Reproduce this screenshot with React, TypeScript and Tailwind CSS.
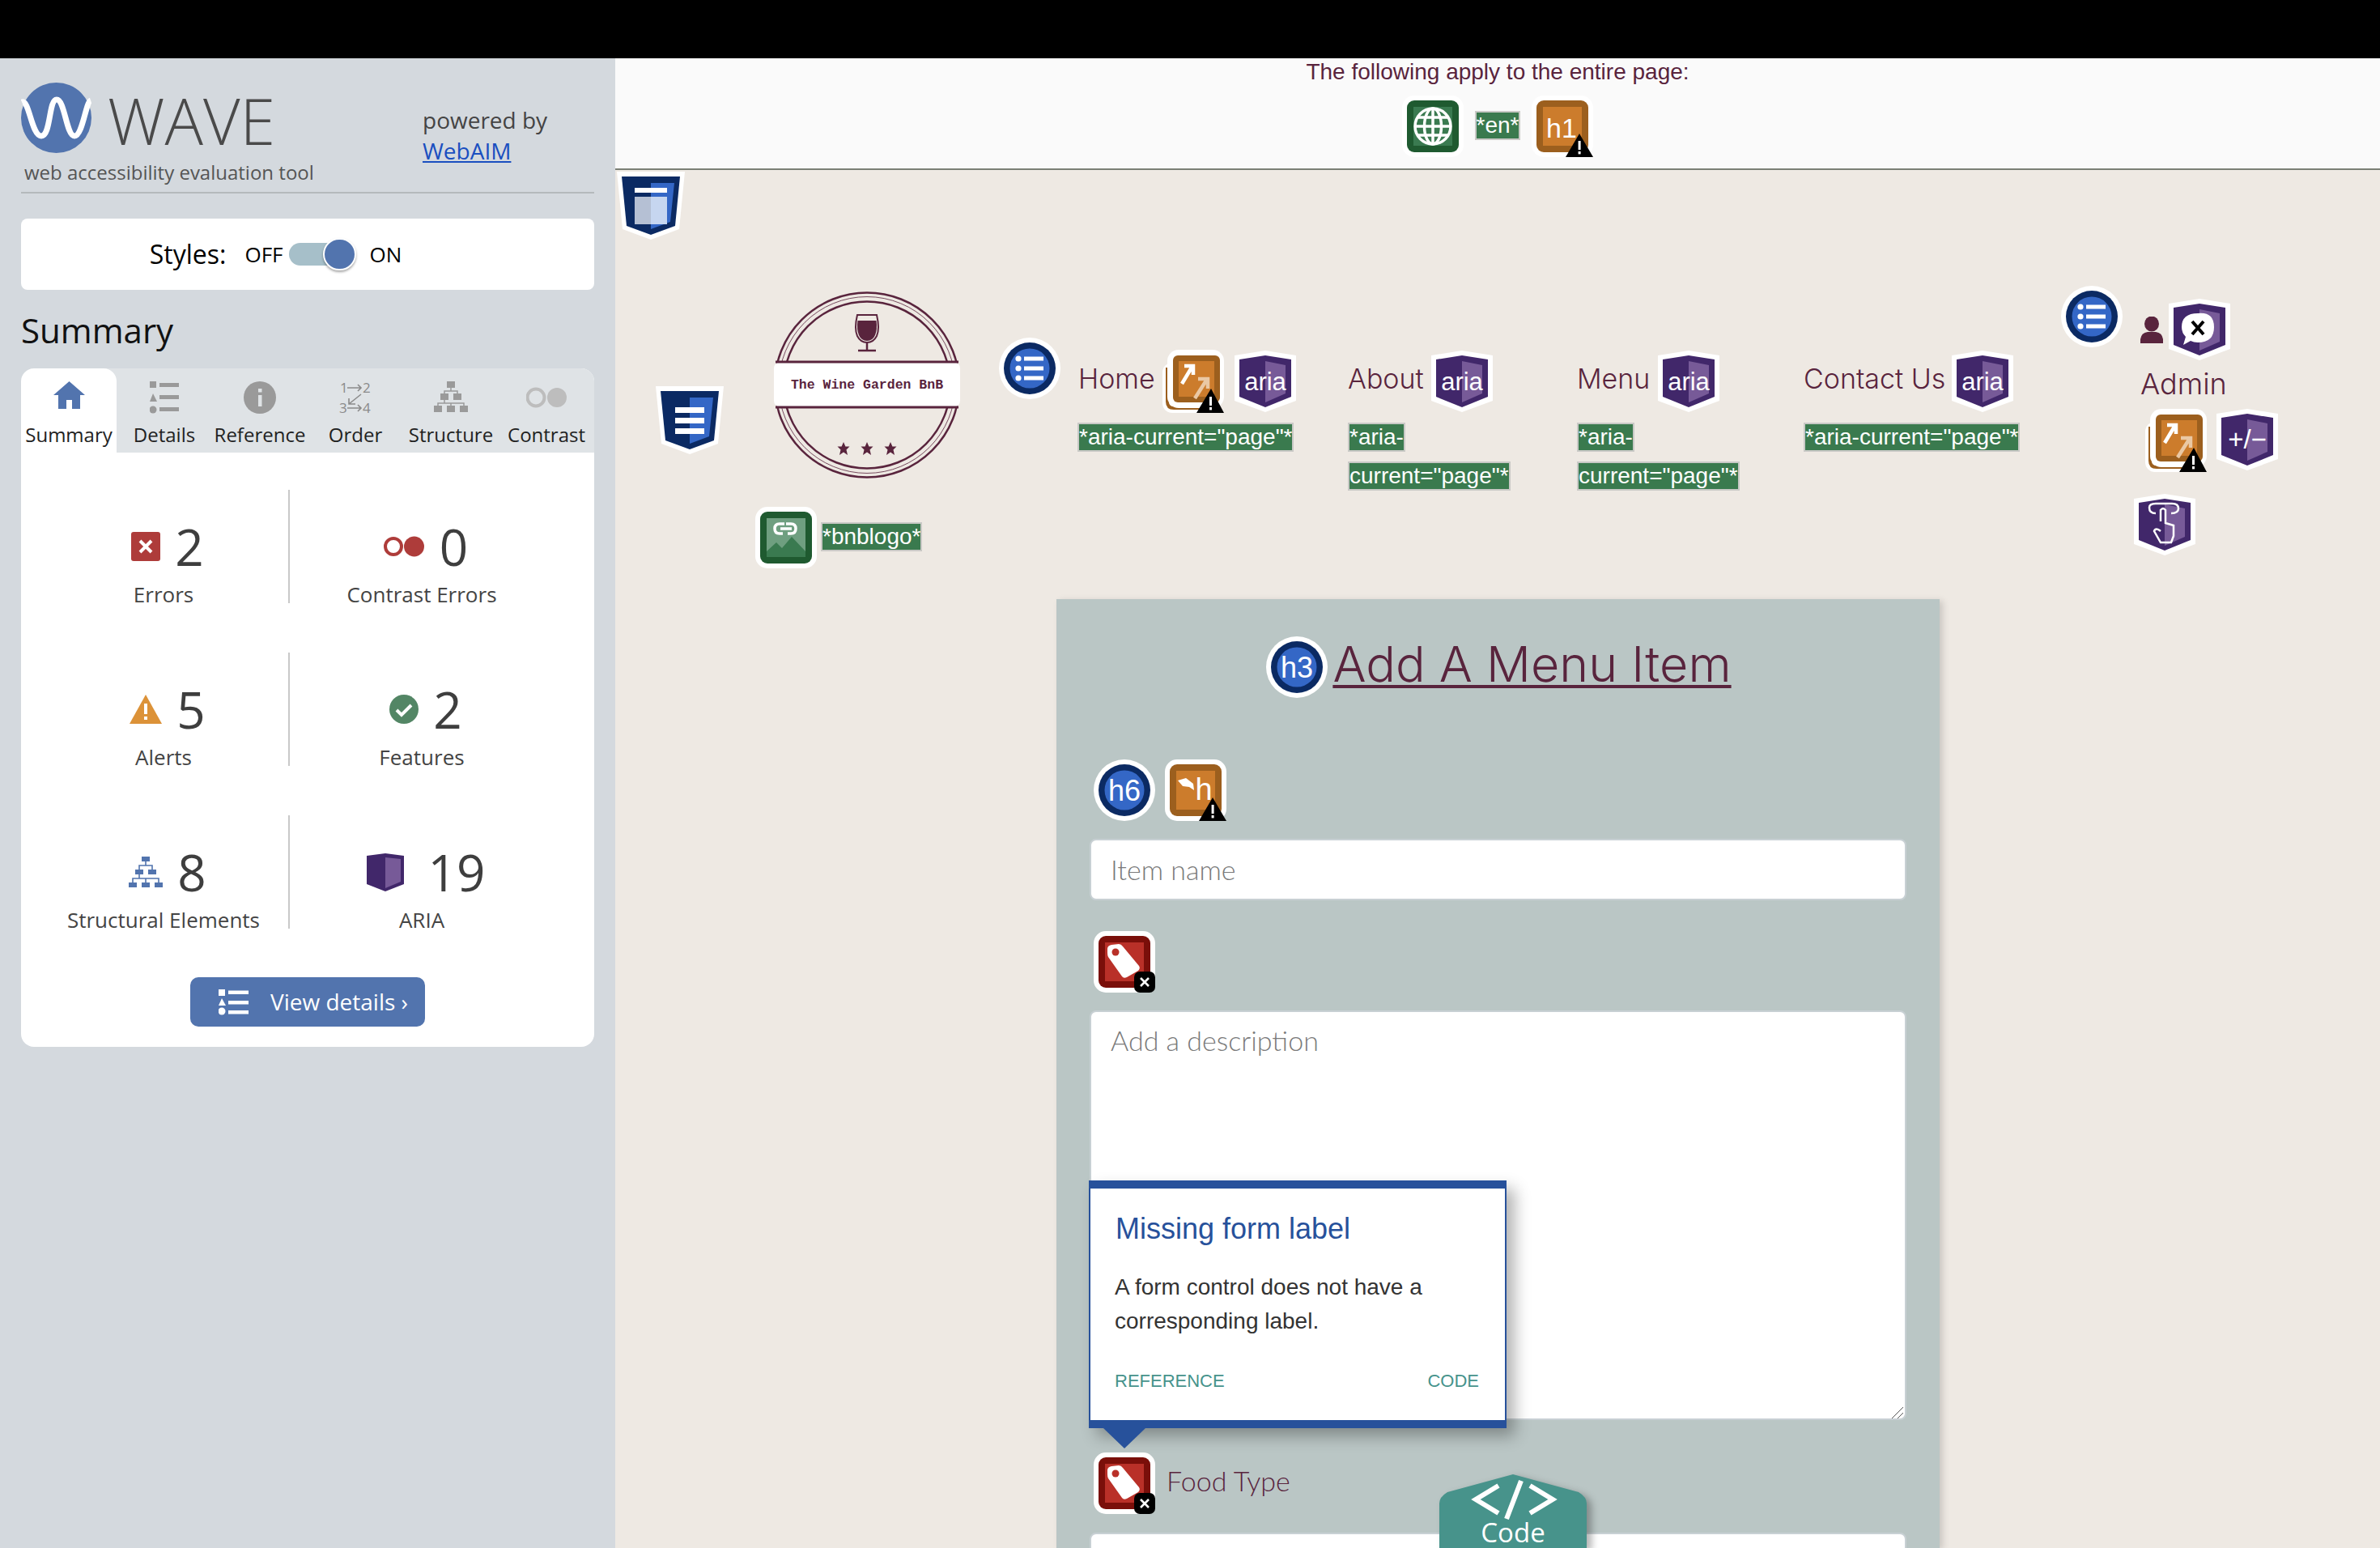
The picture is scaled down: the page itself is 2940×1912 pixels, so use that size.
import React from "react";

const C = {
  purple: ["#41276a", "#775a98"],
  blue: ["#0b2a63", "#3467c6"],
  orange: ["#9c5f1e", "#cc7c2c"],
  green: ["#1f5a30", "#3a7a50"],
  red: ["#7a0f0a", "#b93028"],
};

function Badge({ kind }: { kind?: "alert" | "error" }) {
  if (kind === "alert")
    return (
      <g>
        <path d="M59 47 L76 76 H42 Z" fill="#000" />
        <rect x="57.6" y="56" width="3" height="11" fill="#fff" />
        <rect x="57.6" y="69" width="3" height="3.4" fill="#fff" />
      </g>
    );
  if (kind === "error")
    return (
      <g>
        <rect x="50" y="50" width="26" height="26" rx="7" fill="#000" />
        <path d="M58 58 L68 68 M68 58 L58 68" stroke="#fff" strokeWidth="2.6" />
      </g>
    );
  return null;
}

function Square({ color, children, badge, size = 76 }: { color: string[]; children?: React.ReactNode; badge?: "alert" | "error"; size?: number }) {
  return (
    <svg width={size} height={size} viewBox="0 0 76 76" className="shrink-0 block">
      <rect x="0" y="0" width="76" height="76" rx="15" fill="#fff" />
      <rect x="6" y="6" width="64" height="64" rx="9" fill={color[0]} />
      <rect x="14" y="14" width="48" height="48" fill={color[1]} />
      {children}
      <Badge kind={badge} />
    </svg>
  );
}

function Circle({ children }: { children?: React.ReactNode }) {
  return (
    <svg width="76" height="76" viewBox="0 0 76 76" className="shrink-0 block">
      <circle cx="38" cy="38" r="38" fill="#fff" />
      <circle cx="38" cy="38" r="32" fill={C.blue[0]} />
      <circle cx="38" cy="38" r="24.5" fill={C.blue[1]} />
      {children}
    </svg>
  );
}

function Shield({ children }: { children?: React.ReactNode }) {
  return (
    <svg width="76" height="76" viewBox="0 0 76 76" className="shrink-0 block">
      <path d="M38 0 L76 6 V62 L38 76 L0 62 V6 Z" fill="#fff" />
      <path d="M38 6 L70 11 V57 L38 70 L6 57 V11 Z" fill={C.purple[0]} />
      <path d="M38 13 L63 18 V53 L38 64 Z" fill={C.purple[1]} />
      {children}
    </svg>
  );
}

function BlueShield({ children }: { children?: React.ReactNode }) {
  return (
    <svg width="84" height="84" viewBox="0 0 84 84" className="shrink-0 block">
      <path d="M0 0 H84 L77 71 L42 84 L7 71 Z" fill="#fff" />
      <path d="M6 6 H78 L72 67 L42 78 L12 67 Z" fill={C.blue[0]} />
      <path d="M42 14 H71 L66 62 L42 71 Z" fill={C.blue[1]} />
      {children}
    </svg>
  );
}

const ListLines = () => (
  <g fill="#fff">
    <circle cx="24" cy="26" r="3.6" />
    <circle cx="24" cy="38" r="3.6" />
    <circle cx="24" cy="50" r="3.6" />
    <rect x="31" y="23.5" width="24" height="5" />
    <rect x="31" y="35.5" width="24" height="5" />
    <rect x="31" y="47.5" width="24" height="5" />
  </g>
);

const IconText = ({ t, size = 36, x = 38, y = 50 }: { t: string; size?: number; x?: number; y?: number }) => (
  <text x={x} y={y} textAnchor="middle" fill="#fff" fontFamily="'Liberation Sans', Arial, sans-serif" fontSize={size}>
    {t}
  </text>
);

const Aria = () => (
  <Shield>
    <IconText t="aria" size={31} y={49} />
  </Shield>
);

function LinkAlert() {
  return (
    <svg width="76" height="78" viewBox="0 0 76 78" className="shrink-0 block">
      <rect x="0" y="16" width="66" height="62" rx="12" fill="#fff" />
      <path d="M6 22 V64 Q6 72 14 72 H50" fill="none" stroke={C.orange[0]} strokeWidth="4" />
      <rect x="6" y="0" width="70" height="72" rx="14" fill="#fff" />
      <rect x="13" y="7" width="58" height="58" rx="6" fill={C.orange[0]} />
      <rect x="20" y="14" width="44" height="44" fill={C.orange[1]} />
      <path d="M24 42 L36 22 M27 20 H38 V31" fill="none" stroke="#fff" strokeWidth="4.5" />
      <path d="M40 60 L54 38 M44 36 H56 V48" fill="none" stroke="#eac8a4" strokeWidth="4.5" />
      <path d="M60 48 L76 78 H42 Z" fill="#000" />
      <rect x="58" y="58" width="3" height="11" fill="#fff" />
      <rect x="58" y="71" width="3" height="3.4" fill="#fff" />
    </svg>
  );
}

const TagGlyph = () => (
  <g>
    <path d="M17 22 Q17 18 22 17 L31 16 Q34 16 36 19 L56 43 Q58 46 55 49 L41 57 Q37 59 35 56 L18 32 Q17 30 17 27 Z" fill="#fff" />
    <circle cx="27" cy="26" r="4.5" fill={C.red[1]} />
  </g>
);

function Tag({ children }: { children: React.ReactNode }) {
  return (
    <span className="inline-block h-[36px] bg-[#3a7a4e] border-2 border-[#c9c9c6] text-white text-[28px] leading-[32px] font-['Liberation_Sans',Arial,sans-serif] whitespace-nowrap">
      {children}
    </span>
  );
}

function NavLabel({ children }: { children: React.ReactNode }) {
  return <span className="text-[34px] leading-[44px] font-light text-[#59243d] font-['Inter',sans-serif] whitespace-nowrap">{children}</span>;
}

function Stat({ icon, n, label, gap }: { icon: React.ReactNode; n: string; label: string; gap: string }) {
  return (
    <div className="flex flex-col items-center h-[140px] pt-[34px]">
      <div className={`flex items-center h-[72px] pl-[10px] ${gap}`}>
        {icon}
        <span className="text-[62px] leading-[72px] text-[#3e3e3e]">{n}</span>
      </div>
      <div className="text-[26px] leading-[36px] text-[#444] mt-[5px] whitespace-nowrap">{label}</div>
    </div>
  );
}

function Tab({ icon, label, active }: { icon: React.ReactNode; label: string; active?: boolean }) {
  return (
    <div className={`w-[118px] h-[104px] flex flex-col items-center ${active ? "bg-white rounded-tl-[16px] rounded-tr-[16px]" : ""}`}>
      <div className="h-[64px] pt-[16px] flex items-start justify-center">{icon}</div>
      <div className="text-[24px] leading-[36px] text-[#222] whitespace-nowrap">{label}</div>
    </div>
  );
}

function Sidebar() {
  return (
    <aside className="w-[760px] shrink-0 bg-[#d4d9de] px-[26px] font-['Open_Sans',sans-serif]">
      <div className="flex h-[167px] border-b-2 border-[#b4b9bc]">
        <div className="w-[496px]">
          <div className="flex items-center pt-[30px] h-[117px]">
            <svg width="87" height="87" viewBox="0 0 87 87" className="shrink-0">
              <circle cx="43.5" cy="43.5" r="43.5" fill="#5274ae" />
              <path d="M1 24 C10 20 13 66 25 66 C37 66 34 21 44 21 C54 21 56 66 66 66 C76 66 80 24 86 22" fill="none" stroke="#fff" strokeWidth="7" />
            </svg>
            <span className="ml-[20px] pt-[6px] text-[79px] leading-[80px] font-light text-[#4a4a4a]">WAVE</span>
          </div>
          <div className="ml-[4px] mt-[7px] text-[24px] leading-[34px] text-[#555] whitespace-nowrap">web accessibility evaluation tool</div>
        </div>
        <div className="pt-[57px] text-[28px] leading-[38px] text-[#444]">
          <div>powered by</div>
          <div className="text-[#1a4fc0] underline">WebAIM</div>
        </div>
      </div>

      <div className="mt-[31px] h-[88px] bg-white rounded-[8px] flex items-center justify-center pr-[79px] text-black">
        <span className="text-[32px] mr-[23px]">Styles:</span>
        <span className="text-[26px] mr-[8px]">OFF</span>
        <span className="relative w-[83px] h-[40px] flex items-center mr-[16px]">
          <span className="block w-[70px] h-[28px] rounded-full bg-[#a6bfc9]" />
          <span className="absolute right-0 top-0 w-[41px] h-[40px] rounded-full bg-[#5274ae] border-2 border-white shadow-[0_2px_3px_rgba(0,0,0,0.35)]" />
        </span>
        <span className="text-[26px]">ON</span>
      </div>

      <h2 className="mt-[20px] text-[42px] leading-[60px] text-[#111]">Summary</h2>

      <div className="mt-[17px] bg-white rounded-[16px] h-[838px] overflow-hidden">
        <div className="flex bg-[#dfe3e6] h-[104px]">
          <Tab active label="Summary" icon={
            <svg width="39" height="34" viewBox="0 0 39 34"><path d="M19.5 0 L39 17 H33 V34 H23 V23 H16 V34 H6 V17 H0 Z" fill="#5274ae" /></svg>
          } />
          <Tab label="Details" icon={
            <svg width="36" height="40" viewBox="0 0 36 40" fill="#9a9a9a">
              <rect x="0" y="0" width="8" height="8" /><path d="M4 15 L9 25 H0 Z" /><circle cx="4" cy="35" r="4.5" />
              <rect x="12" y="2" width="24" height="5" /><rect x="12" y="17" width="24" height="5" /><rect x="12" y="32" width="24" height="5" />
            </svg>
          } />
          <Tab label="Reference" icon={
            <svg width="40" height="40" viewBox="0 0 40 40"><circle cx="20" cy="20" r="20" fill="#9a9a9a" /><rect x="18" y="17" width="4.5" height="14" fill="#dfe3e6" /><rect x="18" y="9" width="4.5" height="4.5" fill="#dfe3e6" /></svg>
          } />
          <Tab label="Order" icon={
            <svg width="40" height="40" viewBox="0 0 40 40" fill="#8a8a8a" fontFamily="'Open Sans', sans-serif" fontSize="17" className="overflow-visible">
              <text x="1" y="14">1</text><text x="29" y="14">2</text><text x="0" y="39">3</text><text x="29" y="39">4</text>
              <path d="M10 8 H27 M23 4 L27 8 L23 12 M10 33 H27 M23 29 L27 33 L23 37 M27 16 L12 28 M12 21 V28 H20" fill="none" stroke="#8a8a8a" strokeWidth="1.6" />
            </svg>
          } />
          <Tab label="Structure" icon={
            <svg width="42" height="38" viewBox="0 0 42 38" fill="#9a9a9a">
              <rect x="16" y="0" width="10" height="8" /><rect x="8" y="15" width="10" height="8" /><rect x="24" y="15" width="10" height="8" />
              <rect x="0" y="30" width="10" height="8" /><rect x="16" y="30" width="10" height="8" /><rect x="32" y="30" width="10" height="8" />
              <path d="M21 8 V12 M13 15 V12 H29 V15 M13 23 V27 M5 30 V27 H37 V30 M21 27 V30" fill="none" stroke="#9a9a9a" strokeWidth="1.5" />
            </svg>
          } />
          <Tab label="Contrast" icon={
            <svg width="50" height="40" viewBox="0 0 50 40"><circle cx="12" cy="20" r="10.5" fill="none" stroke="#bdbdbd" strokeWidth="4" /><circle cx="38" cy="20" r="12" fill="#bdbdbd" /></svg>
          } />
        </div>

        <div className="grid grid-cols-[310px_326px] ml-[22px] gap-y-[61px] mt-[46px]">
          <div className="border-r-2 border-[#c9c9c9]">
            <Stat n="2" label="Errors" gap="gap-[18px]" icon={
              <svg width="36" height="36" viewBox="0 0 36 36"><rect width="36" height="36" rx="3" fill="#ae3c3a" /><path d="M11 11 L25 25 M25 11 L11 25" stroke="#fff" strokeWidth="4" /></svg>
            } />
          </div>
          <Stat n="0" label="Contrast Errors" gap="gap-[19px]" icon={
            <svg width="50" height="26" viewBox="0 0 50 26"><circle cx="12" cy="13" r="10" fill="none" stroke="#ae3c3a" strokeWidth="4" /><circle cx="37.5" cy="13" r="12.5" fill="#ae3c3a" /></svg>
          } />
          <div className="border-r-2 border-[#c9c9c9]">
            <Stat n="5" label="Alerts" gap="gap-[18px]" icon={
              <svg width="40" height="36" viewBox="0 0 40 36"><path d="M20 0 L40 36 H0 Z" fill="#dc9238" /><rect x="18" y="11" width="4" height="13" fill="#fff" /><rect x="18" y="27" width="4" height="4" fill="#fff" /></svg>
            } />
          </div>
          <Stat n="2" label="Features" gap="gap-[18px]" icon={
            <svg width="36" height="36" viewBox="0 0 36 36"><circle cx="18" cy="18" r="18" fill="#538665" /><path d="M9 19 L15 25 L27 13" fill="none" stroke="#fff" strokeWidth="4" /></svg>
          } />
          <div className="border-r-2 border-[#c9c9c9]">
            <Stat n="8" label="Structural Elements" gap="gap-[18px]" icon={
              <svg width="42" height="38" viewBox="0 0 42 38" fill="#5274ae">
                <rect x="16" y="0" width="10" height="6" /><rect x="8" y="16" width="10" height="6" /><rect x="24" y="16" width="10" height="6" />
                <rect x="0" y="32" width="10" height="6" /><rect x="16" y="32" width="10" height="6" /><rect x="32" y="32" width="10" height="6" />
                <path d="M21 6 V11 M13 16 V11 H29 V16 M13 22 V27 M5 32 V27 H37 V32 M21 27 V32" fill="none" stroke="#5274ae" strokeWidth="1.6" />
              </svg>
            } />
          </div>
          <Stat n="19" label="ARIA" gap="gap-[30px]" icon={
            <svg width="46" height="47" viewBox="0 0 46 47"><path d="M23 0 L46 3 V38 L23 47 L0 38 V3 Z" fill="#41276a" /><path d="M23 5 L42 7 V35 L23 43 Z" fill="#775a98" /></svg>
          } />
        </div>

        <div className="mt-[60px] mx-auto w-[290px] h-[61px] rounded-[10px] bg-[#5274ae] flex items-center pl-[35px] text-white">
          <svg width="37" height="32" viewBox="0 0 37 32" fill="#fff">
            <rect x="0" y="0" width="8" height="8" /><path d="M4 11 L9 20 H0 Z" /><circle cx="4" cy="27" r="4.5" />
            <rect x="12" y="1.5" width="25" height="4.5" /><rect x="12" y="14" width="25" height="4.5" /><rect x="12" y="26" width="25" height="4.5" />
          </svg>
          <span className="ml-[27px] pb-[2px] text-[28px] whitespace-nowrap">View details ›</span>
        </div>
      </div>
    </aside>
  );
}

function Logo() {
  const star = (x: number) => (
    <path key={x} transform={`translate(${x} 194)`} d="M0 -8 L2.4 -2.5 L7.5 -2.5 L3.5 1.5 L5 8 L0 4.5 L-5 8 L-3.5 1.5 L-7.5 -2.5 L-2.4 -2.5 Z" fill="#59243d" />
  );
  return (
    <svg width="230" height="231" viewBox="0 0 230 231" className="block">
      <circle cx="115" cy="115.5" r="114" fill="none" stroke="#59243d" strokeWidth="2.5" />
      <circle cx="115" cy="115.5" r="109" fill="none" stroke="#59243d" strokeWidth="0.8" />
      <circle cx="115" cy="115.5" r="103" fill="none" stroke="#59243d" strokeWidth="2.5" />
      <path d="M103 29 H127 Q131 46 127 55 Q123 63 115 63 Q107 63 103 55 Q99 46 103 29 Z" fill="none" stroke="#59243d" strokeWidth="2" />
      <path d="M103.5 36 H126.5 Q128 47 125 54 Q122 61 115 61 Q108 61 105 54 Q102 47 103.5 36 Z" fill="#59243d" />
      <path d="M115 63 V72 M104 73 H126" stroke="#59243d" strokeWidth="2.5" />
      <rect x="0" y="87" width="230" height="56" rx="8" fill="#fff" />
      <path d="M2 87 H228 M2 143 H228" stroke="#59243d" strokeWidth="3" />
      <text x="115" y="120" textAnchor="middle" fontFamily="'Liberation Mono', monospace" fontWeight="700" fontSize="16.5" fill="#59243d">The Wine Garden BnB</text>
      {[86, 115, 144].map(star)}
    </svg>
  );
}

function Main() {
  return (
    <main className="flex-1 relative bg-[#eee9e3] flex flex-col">
      <div className="h-[138px] shrink-0 bg-[#fafafa] border-b-2 border-[#7a7f75] flex flex-col items-center">
        <div className="text-[28px] leading-[32px] mt-[1px] text-[#59243d] font-['Liberation_Sans',Arial,sans-serif] whitespace-nowrap">The following apply to the entire page:</div>
        <div className="flex items-center mt-[13px]">
          <Square color={C.green}>
            <g fill="none" stroke="#fff" strokeWidth="3.5">
              <circle cx="38" cy="38" r="22" />
              <ellipse cx="38" cy="38" rx="10.5" ry="22" />
              <path d="M38 16 V60 M19 27 H57 M19 49 H57 M16 38 H60" />
            </g>
          </Square>
          <span className="ml-[14px] mr-[14px] -mt-[2px]"><Tag>*en*</Tag></span>
          <Square color={C.orange} badge="alert"><IconText t="h1" size={34} y={52} x={37} /></Square>
        </div>
      </div>

      <div className="absolute left-[2px] top-[140px]">
        <BlueShield>
          <rect x="22" y="20" width="40" height="6" fill="#fff" />
          <rect x="22" y="31" width="20" height="34" fill="#b5c0d4" />
          <rect x="42" y="31" width="20" height="34" fill="#c6d6f0" />
        </BlueShield>
      </div>

      <header className="h-[530px] shrink-0 flex items-start">
        <div className="ml-[50px] mt-[267px]">
          <BlueShield>
            <rect x="24" y="26" width="36" height="7" fill="#fff" />
            <rect x="24" y="39" width="36" height="7" fill="#fff" />
            <rect x="24" y="52" width="36" height="7" fill="#fff" />
          </BlueShield>
        </div>

        <div className="ml-[39px] w-[252px] mt-[150px] flex flex-col">
          <div className="ml-[23px]"><Logo /></div>
          <div className="flex items-center mt-[35px]">
            <Square color={C.green}>
              <rect x="14" y="14" width="48" height="48" fill="#6f9f80" />
              <path d="M14 62 V55 L26 44 L33 51 L45 37 L62 55 V62 Z" fill="#3a7a50" />
              <path d="M36 21 H30 Q24 21 24 27 Q24 33 30 33 H34 M38 21 H44 Q50 21 50 27 Q50 33 44 33 H40 M31 27 H45" fill="none" stroke="#fff" strokeWidth="3.5" />
            </Square>
            <span className="ml-[5px] -mt-[2px]"><Tag>*bnblogo*</Tag></span>
          </div>
        </div>

        <div className="ml-[49px] mt-[207px]"><Circle><ListLines /></Circle></div>

        <div className="ml-[21px] mt-[223px] w-[272px] flex flex-col items-start">
          <div className="flex items-center h-[76px]">
            <span className="ml-[1px] mt-[-7px]"><NavLabel>Home</NavLabel></span>
            <span className="ml-[9px]"><LinkAlert /></span>
            <span className="ml-[13px]"><Aria /></span>
          </div>
          <div className="mt-[13px]"><Tag>*aria-current="page"*</Tag></div>
        </div>

        <div className="ml-[62px] mt-[223px] w-[198px] flex flex-col items-start">
          <div className="flex items-center h-[76px]"><span className="mt-[-7px]"><NavLabel>About</NavLabel></span><span className="ml-[9px]"><Aria /></span></div>
          <div className="mt-[13px]"><Tag>*aria-</Tag></div>
          <div className="mt-[12px]"><Tag>current="page"*</Tag></div>
        </div>

        <div className="ml-[85px] mt-[223px] w-[198px] flex flex-col items-start">
          <div className="flex items-center h-[76px]"><span className="mt-[-7px]"><NavLabel>Menu</NavLabel></span><span className="ml-[10px]"><Aria /></span></div>
          <div className="mt-[13px]"><Tag>*aria-</Tag></div>
          <div className="mt-[12px]"><Tag>current="page"*</Tag></div>
        </div>

        <div className="ml-[82px] mt-[223px] w-[270px] flex flex-col items-start">
          <div className="flex items-center h-[76px]"><span className="mt-[-7px]"><NavLabel>Contact Us</NavLabel></span><span className="ml-[8px]"><Aria /></span></div>
          <div className="mt-[13px]"><Tag>*aria-current="page"*</Tag></div>
        </div>

        <div className="ml-[48px] mt-[143px]"><Circle><ListLines /></Circle></div>

        <div className="ml-[14px] mt-[159px] flex flex-col w-[180px]">
          <div className="flex items-end ml-[8px]">
            <svg width="28" height="33" viewBox="0 0 28 33" className="mb-[21px]">
              <ellipse cx="14" cy="9" rx="9" ry="9.5" fill="#59243d" />
              <path d="M0 33 V28 Q1 20 9 19 H19 Q27 20 28 28 V33 Z" fill="#59243d" />
            </svg>
            <span className="ml-[7px]">
              <Shield>
                <path d="M36 18 Q56 16 56 35 Q56 54 36 54 Q31 54 27 52 L18 57 L21 47 Q16 42 16 35 Q16 18 36 18 Z" fill="#fff" />
                <path d="M29 28 L43 44 M43 28 L29 44" stroke="#000" strokeWidth="4" />
              </Shield>
            </span>
          </div>
          <div className="ml-[8px] mt-[7px]"><span className="text-[36px] leading-[44px] font-light text-[#59243d] font-['Inter',sans-serif]">Admin</span></div>
          <div className="flex items-start ml-[14px] mt-[9px]">
            <LinkAlert />
            <span className="ml-[12px]">
              <Shield>
                <IconText t="+/−" size={33} y={49} />
              </Shield>
            </span>
          </div>
          <div className="mt-[27px]">
            <Shield>
              <g fill="none" stroke="#fff" strokeWidth="2.5">
                <path d="M27 24 Q19 24 19 17 Q19 12 27 12 H47 Q55 12 55 18 Q55 24 46 24" />
                <path d="M33 34 V20 Q36 16 39 20 V36 L49 39 V52 L46 60 H33 L25 46 Q27 41 33 46" />
              </g>
            </Shield>
          </div>
        </div>
      </header>

      <section className="ml-[545px] w-[1091px] flex-1 min-h-0 bg-[#bac6c5] shadow-[4px_2px_8px_rgba(0,0,0,0.15)] pl-[41px] pr-[41px] pt-[46px]">
        <div className="flex items-center justify-center pl-[2px] h-[76px]">
          <Circle><IconText t="h3" size={36} y={51} /></Circle>
          <h3 className="ml-[6px] pb-[9px] text-[61px] leading-[76px] font-light text-[#59243d] underline decoration-4 underline-offset-4 font-['Inter',sans-serif] whitespace-nowrap">Add A Menu Item</h3>
        </div>

        <div className="flex ml-[5px] mt-[76px] gap-[12px]">
          <Circle><IconText t="h6" size={36} y={51} /></Circle>
          <Square color={C.orange} badge="alert">
            <path d="M16 26 L26 23 L35 30 L36 38 L30 34 L22 33 Z" fill="#fff" />
            <IconText t="h" size={38} x={48} y={50} />
          </Square>
        </div>

        <input readOnly placeholder="Item name" className="block mt-[22px] w-[1009px] h-[76px] bg-white border-2 border-[#c8d0d4] rounded-[8px] px-[24px] pb-[2px] text-[34px] font-light font-['Lato',sans-serif] placeholder:text-[#7a7a7a]" />

        <div className="ml-[5px] mt-[38px]"><Square color={C.red} badge="error"><TagGlyph /></Square></div>

        <div className="relative mt-[22px]">
          <textarea readOnly placeholder="Add a description" className="block resize-none w-[1009px] h-[506px] bg-white border-2 border-[#c8d0d4] rounded-[8px] px-[24px] py-[9px] text-[34px] font-light font-['Lato',sans-serif] placeholder:text-[#7a7a7a]" />
          <svg width="16" height="16" viewBox="0 0 16 16" className="absolute right-[3px] bottom-[1px] pointer-events-none">
            <path d="M1 15 L15 1 M8 15 L15 8" stroke="#555" strokeWidth="1" fill="none" />
          </svg>
          <div className="absolute left-[-1px] top-[210px] w-[516px] h-[306px] bg-white border-x-2 border-t-[10px] border-b-[10px] border-[#27519b] shadow-[10px_10px_18px_rgba(0,0,0,0.3)] font-['Liberation_Sans',Arial,sans-serif] px-[31px] pt-[25px]">
            <div className="text-[36px] leading-[50px] text-[#27519b] whitespace-nowrap">Missing form label</div>
            <p className="mt-[26px] -ml-[1px] text-[28px] leading-[42px] text-[#333]">A form control does not have a corresponding label.</p>
            <div className="flex justify-between mt-[37px] -ml-[1px] mr-[1px] text-[22px] leading-[32px] text-[#46938c]">
              <span>REFERENCE</span>
              <span>CODE</span>
            </div>
            <svg width="52" height="25" viewBox="0 0 52 25" className="absolute left-[16px] top-[296px]"><path d="M0 0 H52 L26 25 Z" fill="#27519b" /></svg>
          </div>
        </div>

        <div className="flex items-center ml-[5px] mt-[40px]">
          <Square color={C.red} badge="error"><TagGlyph /></Square>
          <span className="ml-[14px] pb-[8px] text-[34px] font-light text-[#59243d] font-['Lato',sans-serif]">Food Type</span>
        </div>

        <input readOnly className="block mt-[23px] w-[1009px] h-[76px] bg-white border-2 border-[#c8d0d4] rounded-[8px]" />
      </section>

      <div className="absolute left-[1018px] bottom-0 w-[182px] h-[91px] text-white">
        <svg width="182" height="91" viewBox="0 0 182 91" className="absolute inset-0 drop-shadow-[6px_4px_5px_rgba(0,0,0,0.3)]">
          <path d="M0 91 V36 Q0 28 10 22 L91 0 L172 22 Q182 28 182 36 V91 Z" fill="#47938b" />
          <path d="M73 14 L45 31 L73 48 M112 14 L140 31 L112 48 M101 8 L83 55" fill="none" stroke="#fff" strokeWidth="6" />
        </svg>
        <div className="absolute inset-x-0 bottom-0 text-center text-[33px] leading-[38px] font-['Open_Sans',sans-serif]">Code</div>
      </div>
    </main>
  );
}

export default function App() {
  return (
    <div className="h-[1912px] w-[2940px] overflow-hidden flex flex-col">
      <div className="h-[72px] shrink-0 bg-black" />
      <div className="flex-1 min-h-0 flex">
        <Sidebar />
        <Main />
      </div>
    </div>
  );
}
